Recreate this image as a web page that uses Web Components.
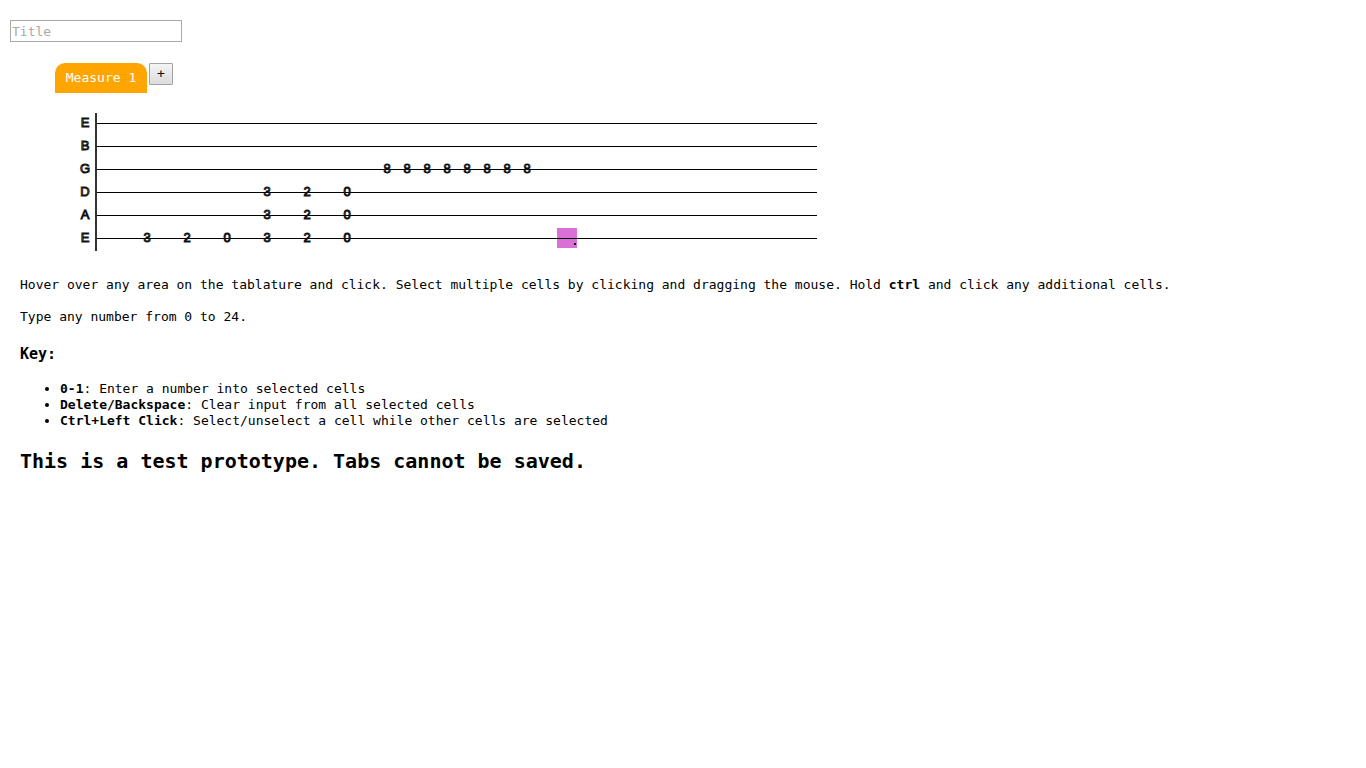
<!DOCTYPE html>
<html lang="en">
<head>
<meta charset="utf-8">
<title>Guitar tab editor</title>
<style>
  body {
    margin: 0;
    background: #fff;
    color: #000;
    font: 13px/16px "DejaVu Sans Mono", "Liberation Mono", monospace;
  }
</style>
</head>
<body>
<tab-editor></tab-editor>

<script>
  const define = (name, html, setup) => {
    const template = document.createElement('template');
    template.innerHTML = html;
    customElements.define(name, class extends HTMLElement {
      connectedCallback() {
        if (this.shadowRoot) return;
        const root = this.attachShadow({ mode: 'open' });
        root.append(template.content.cloneNode(true));
        if (setup) setup(this, root);
      }
    });
  };

  define('song-title', `
    <style>
      :host { display: block; }
      input {
        display: block; box-sizing: border-box;
        width: 172px; height: 22px; margin: 0; padding: 1px;
        border: 1px solid #a9a9a9; background: #fff; color: #000;
        font: inherit;
      }
      input::placeholder { color: #a9a9a9; opacity: 1; }
    </style>
    <input type="text" placeholder="Title" aria-label="Title">`);

  define('measure-tabs', `
    <style>
      :host { display: flex; align-items: flex-start; gap: 2px; }
      button { margin: 0; font: inherit; }
      .measure {
        height: 30px; min-width: 92px; padding: 0 10px; border: 0;
        border-radius: 10px 10px 0 0; background: orange; color: #fff;
      }
      .add {
        box-sizing: border-box; width: 24px; height: 22px; padding: 0;
        border: 1px solid #a3a3a3; border-radius: 1px; color: #000;
        background: linear-gradient(#f4f4f4, #dcdcdc);
      }
    </style>
    <button class="measure" type="button"><slot></slot></button>
    <button class="add" type="button" aria-label="Add measure">+</button>`);

  // One string of the instrument: "notes" holds column:fret pairs.
  define('tab-string', `
    <style>
      :host {
        display: flex; height: 23px;
        font: 13px/20px "Liberation Sans", Arial, sans-serif;
        -webkit-text-stroke: 1px #111;
        -webkit-text-fill-color: transparent;
      }
      .name { width: 20px; text-align: center; }
      .cells {
        display: grid; grid-template-columns: repeat(36, 20px);
        border-left: 2px solid #333;
        background: linear-gradient(#000, #000) 0 10px / 100% 1px no-repeat;
      }
      .cell { height: 20px; text-align: center; }
      .cell.selected {
        background: linear-gradient(#000, #000) 0 10px / 100% 1px no-repeat, orchid;
      }
      .cell.cursor::after {
        content: ""; display: block; width: 2px; height: 2px;
        margin: 15px 1px 0 auto; background: #000;
      }
    </style>
    <span class="name"></span>
    <div class="cells"></div>`, (host, root) => {
      root.querySelector('.name').textContent = host.getAttribute('name');
      const notes = new Map((host.getAttribute('notes') || '').split(' ')
        .filter(Boolean).map(pair => pair.split(':')));
      const selected = host.getAttribute('selected');
      const cells = root.querySelector('.cells');
      for (let column = 0; column < 36; column++) {
        const cell = document.createElement('div');
        cell.className = 'cell';
        cell.textContent = notes.get(String(column)) || '';
        if (String(column) === selected) cell.classList.add('selected', 'cursor');
        cells.append(cell);
      }
    });

  define('tab-staff', `
    <style>:host { display: block; }</style>
    <tab-string name="E"></tab-string>
    <tab-string name="B"></tab-string>
    <tab-string name="G" notes="14:8 15:8 16:8 17:8 18:8 19:8 20:8 21:8"></tab-string>
    <tab-string name="D" notes="8:3 10:2 12:0"></tab-string>
    <tab-string name="A" notes="8:3 10:2 12:0"></tab-string>
    <tab-string name="E" notes="2:3 4:2 6:0 8:3 10:2 12:0" selected="23"></tab-string>`);

  define('help-text', `
    <style>
      :host { display: block; }
      p { margin: 0 0 16px; }
      h3 { margin: 20px 0 18px; font-size: 15px; line-height: 18px; }
      ul { margin: 0 0 20px; padding-left: 40px; }
      h2 { margin: 0; font-size: 20px; line-height: 24px; }
    </style>
    <p>Hover over any area on the tablature and click. Select multiple cells by clicking and dragging the mouse. Hold <b>ctrl</b> and click any additional cells.</p>
    <p>Type any number from 0 to 24.</p>
    <h3>Key:</h3>
    <ul>
      <li><b>0-1</b>: Enter a number into selected cells</li>
      <li><b>Delete/Backspace</b>: Clear input from all selected cells</li>
      <li><b>Ctrl+Left Click</b>: Select/unselect a cell while other cells are selected</li>
    </ul>
    <h2>This is a test prototype. Tabs cannot be saved.</h2>`);

  define('tab-editor', `
    <style>
      :host { display: block; padding: 20px 10px; }
      measure-tabs { margin: 21px 0 20px 45px; }
      tab-staff { margin-left: 65px; }
      help-text { margin: 26px 10px 0; }
    </style>
    <song-title></song-title>
    <measure-tabs>Measure 1</measure-tabs>
    <tab-staff></tab-staff>
    <help-text></help-text>`);
</script>
</body>
</html>
